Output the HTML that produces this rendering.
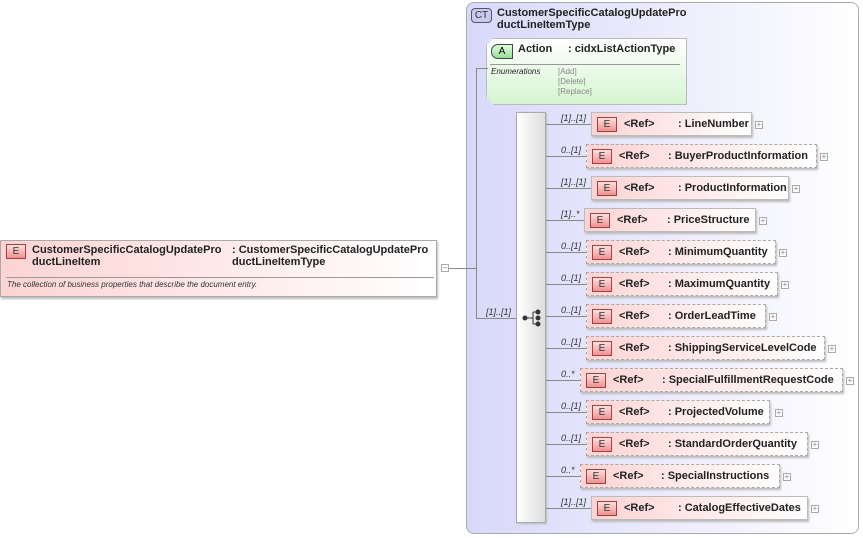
<!DOCTYPE html><html><head><style>
body{margin:0;width:863px;height:538px;background:#fff;position:relative;overflow:hidden;font-family:"Liberation Sans",sans-serif;}
.a{position:absolute}
.bx{position:absolute;height:24px;background:linear-gradient(90deg,#fdd3d3,#fff);border:1px solid #bbb;box-shadow:1px 2px 2px #bbb;box-sizing:border-box}
.d{border:1px dashed #aaa}
.bg{position:absolute;left:5px;top:4px;width:20px;height:15px;box-sizing:border-box;border:1px solid #a04040;background:linear-gradient(180deg,#fbe0e0,#f09090);font-size:10px;text-align:center;line-height:13px;color:#333}
.t{position:absolute;top:5px;font-size:11px;font-weight:bold;color:#222;white-space:nowrap}
.p{position:absolute;width:8px;height:8px;border:1px solid #aaa;box-sizing:border-box;background:#fff;font-size:8px;line-height:6px;text-align:center;color:#888}
.c{position:absolute;font-size:9px;font-style:italic;color:#333}
.h{position:absolute;height:1px;background:#888}
</style></head><body>
<div class="a" style="left:466px;top:2px;width:393px;height:532px;background:linear-gradient(90deg,#d8d8fa,#fff);border:1px solid #aaa;border-radius:8px;box-sizing:border-box"></div>
<div class="a" style="left:471px;top:8px;width:19px;height:13px;border:1px solid #556;border-radius:4px;background:#c8c8f0;font-size:10px;line-height:13px;text-align:center;color:#333">CT</div>
<div class="a" style="left:497px;top:7px;font-size:11px;font-weight:bold;color:#222;line-height:12px">CustomerSpecificCatalogUpdatePro<br>ductLineItemType</div>
<div class="a" style="left:486px;top:38px;width:201px;height:67px;background:linear-gradient(180deg,#fff,#d5f5d0);border:1px solid #bbb;box-sizing:border-box;clip-path:polygon(8px 0,100% 0,100% 100%,8px 100%,0 calc(100% - 8px),0 8px);box-shadow:1px 2px 2px #bbb"></div>
<div class="a" style="left:491px;top:44px;width:20px;height:13px;border:1px solid #444;border-radius:7px 0 0 7px;background:linear-gradient(180deg,#dfd,#9d9);font-size:10px;text-align:center;line-height:13px">A</div>
<div class="a" style="left:518px;top:43px;font-size:11px;font-weight:bold;color:#222">Action</div>
<div class="a" style="left:568px;top:43px;font-size:11px;font-weight:bold;color:#222">: cidxListActionType</div>
<div class="h" style="left:490px;top:64px;width:190px;background:#999"></div>
<div class="a" style="left:491px;top:67px;font-size:8px;font-style:italic;color:#222">Enumerations</div>
<div class="a" style="left:558px;top:67px;font-size:8px;color:#888;line-height:10px">[Add]<br>[Delete]<br>[Replace]</div>
<div class="a" style="left:0;top:240px;width:437px;height:57px;background:linear-gradient(90deg,#fdd3d3,#fff);border:1px solid #aaa;box-sizing:border-box;box-shadow:1px 2px 2px #bbb"></div>
<div class="bg" style="left:6px;top:244px">E</div>
<div class="a" style="left:32px;top:244px;font-size:11px;font-weight:bold;line-height:12px;color:#222">CustomerSpecificCatalogUpdatePro<br>ductLineItem</div>
<div class="a" style="left:232px;top:244px;font-size:11px;font-weight:bold;line-height:12px;color:#222">: CustomerSpecificCatalogUpdatePro<br>ductLineItemType</div>
<div class="h" style="left:6px;top:277px;width:428px;background:#999"></div>
<div class="a" style="left:7px;top:280px;font-size:8px;font-style:italic;color:#333">The collection of business properties that describe the document entry.</div>
<div class="p" style="left:441px;top:264px">−</div>
<div class="h" style="left:449px;top:268px;width:27px"></div>
<div class="a" style="left:476px;top:68px;width:1px;height:251px;background:#888"></div>
<div class="h" style="left:476px;top:68px;width:12px"></div>
<div class="h" style="left:476px;top:318px;width:40px"></div>
<div class="c" style="left:486px;top:307px">[1]..[1]</div>
<div class="a" style="left:516px;top:112px;width:30px;height:411px;background:linear-gradient(90deg,#fff,#ddd);border:1px solid #aaa;box-sizing:border-box;box-shadow:1px 1px 2px #bbb"></div>
<svg class="a" style="left:520px;top:308px" width="24" height="20"><g fill="#333" stroke="#333"><circle cx="5" cy="10" r="2"/><circle cx="18" cy="4" r="2"/><circle cx="18" cy="10" r="2"/><circle cx="18" cy="16" r="2"/><path d="M5 10H13M13 4V16M13 4H18M13 16H18" fill="none"/></g></svg>

<div class="h" style="left:546px;top:124px;width:45px"></div><div class="c" style="left:561px;top:113px">[1]..[1]</div>
<div class="bx" style="left:591px;top:112px;width:161px"><div class="bg">E</div><div class="t" style="left:32px">&lt;Ref&gt;</div><div class="t" style="left:86px">: LineNumber</div></div><div class="p" style="left:755px;top:121px">+</div>

<div class="h" style="left:546px;top:156px;width:40px"></div><div class="c" style="left:561px;top:145px">0..[1]</div>
<div class="bx d" style="left:586px;top:144px;width:231px"><div class="bg">E</div><div class="t" style="left:32px">&lt;Ref&gt;</div><div class="t" style="left:81px">: BuyerProductInformation</div></div><div class="p" style="left:820px;top:153px">+</div>

<div class="h" style="left:546px;top:188px;width:45px"></div><div class="c" style="left:561px;top:177px">[1]..[1]</div>
<div class="bx" style="left:591px;top:176px;width:198px"><div class="bg">E</div><div class="t" style="left:32px">&lt;Ref&gt;</div><div class="t" style="left:86px">: ProductInformation</div></div><div class="p" style="left:792px;top:185px">+</div>

<div class="h" style="left:546px;top:220px;width:38px"></div><div class="c" style="left:561px;top:209px">[1]..*</div>
<div class="bx" style="left:584px;top:208px;width:172px"><div class="bg">E</div><div class="t" style="left:32px">&lt;Ref&gt;</div><div class="t" style="left:82px">: PriceStructure</div></div><div class="p" style="left:759px;top:217px">+</div>

<div class="h" style="left:546px;top:252px;width:40px"></div><div class="c" style="left:561px;top:241px">0..[1]</div>
<div class="bx d" style="left:586px;top:240px;width:190px"><div class="bg">E</div><div class="t" style="left:32px">&lt;Ref&gt;</div><div class="t" style="left:81px">: MinimumQuantity</div></div><div class="p" style="left:779px;top:249px">+</div>

<div class="h" style="left:546px;top:284px;width:40px"></div><div class="c" style="left:561px;top:273px">0..[1]</div>
<div class="bx d" style="left:586px;top:272px;width:192px"><div class="bg">E</div><div class="t" style="left:32px">&lt;Ref&gt;</div><div class="t" style="left:81px">: MaximumQuantity</div></div><div class="p" style="left:781px;top:281px">+</div>

<div class="h" style="left:546px;top:316px;width:40px"></div><div class="c" style="left:561px;top:305px">0..[1]</div>
<div class="bx d" style="left:586px;top:304px;width:180px"><div class="bg">E</div><div class="t" style="left:32px">&lt;Ref&gt;</div><div class="t" style="left:81px">: OrderLeadTime</div></div><div class="p" style="left:769px;top:313px">+</div>

<div class="h" style="left:546px;top:348px;width:40px"></div><div class="c" style="left:561px;top:337px">0..[1]</div>
<div class="bx d" style="left:586px;top:336px;width:239px"><div class="bg">E</div><div class="t" style="left:32px">&lt;Ref&gt;</div><div class="t" style="left:81px">: ShippingServiceLevelCode</div></div><div class="p" style="left:828px;top:345px">+</div>

<div class="h" style="left:546px;top:380px;width:34px"></div><div class="c" style="left:561px;top:369px">0..*</div>
<div class="bx d" style="left:580px;top:368px;width:263px"><div class="bg">E</div><div class="t" style="left:32px">&lt;Ref&gt;</div><div class="t" style="left:81px">: SpecialFulfillmentRequestCode</div></div><div class="p" style="left:846px;top:377px">+</div>

<div class="h" style="left:546px;top:412px;width:40px"></div><div class="c" style="left:561px;top:401px">0..[1]</div>
<div class="bx d" style="left:586px;top:400px;width:184px"><div class="bg">E</div><div class="t" style="left:32px">&lt;Ref&gt;</div><div class="t" style="left:81px">: ProjectedVolume</div></div><div class="p" style="left:775px;top:409px">+</div>

<div class="h" style="left:546px;top:444px;width:40px"></div><div class="c" style="left:561px;top:433px">0..[1]</div>
<div class="bx d" style="left:586px;top:432px;width:222px"><div class="bg">E</div><div class="t" style="left:32px">&lt;Ref&gt;</div><div class="t" style="left:81px">: StandardOrderQuantity</div></div><div class="p" style="left:811px;top:441px">+</div>

<div class="h" style="left:546px;top:476px;width:34px"></div><div class="c" style="left:561px;top:465px">0..*</div>
<div class="bx d" style="left:580px;top:464px;width:200px"><div class="bg">E</div><div class="t" style="left:32px">&lt;Ref&gt;</div><div class="t" style="left:80px">: SpecialInstructions</div></div><div class="p" style="left:783px;top:473px">+</div>

<div class="h" style="left:546px;top:508px;width:45px"></div><div class="c" style="left:561px;top:497px">[1]..[1]</div>
<div class="bx" style="left:591px;top:496px;width:217px"><div class="bg">E</div><div class="t" style="left:32px">&lt;Ref&gt;</div><div class="t" style="left:86px">: CatalogEffectiveDates</div></div><div class="p" style="left:811px;top:505px">+</div>
</body></html>
